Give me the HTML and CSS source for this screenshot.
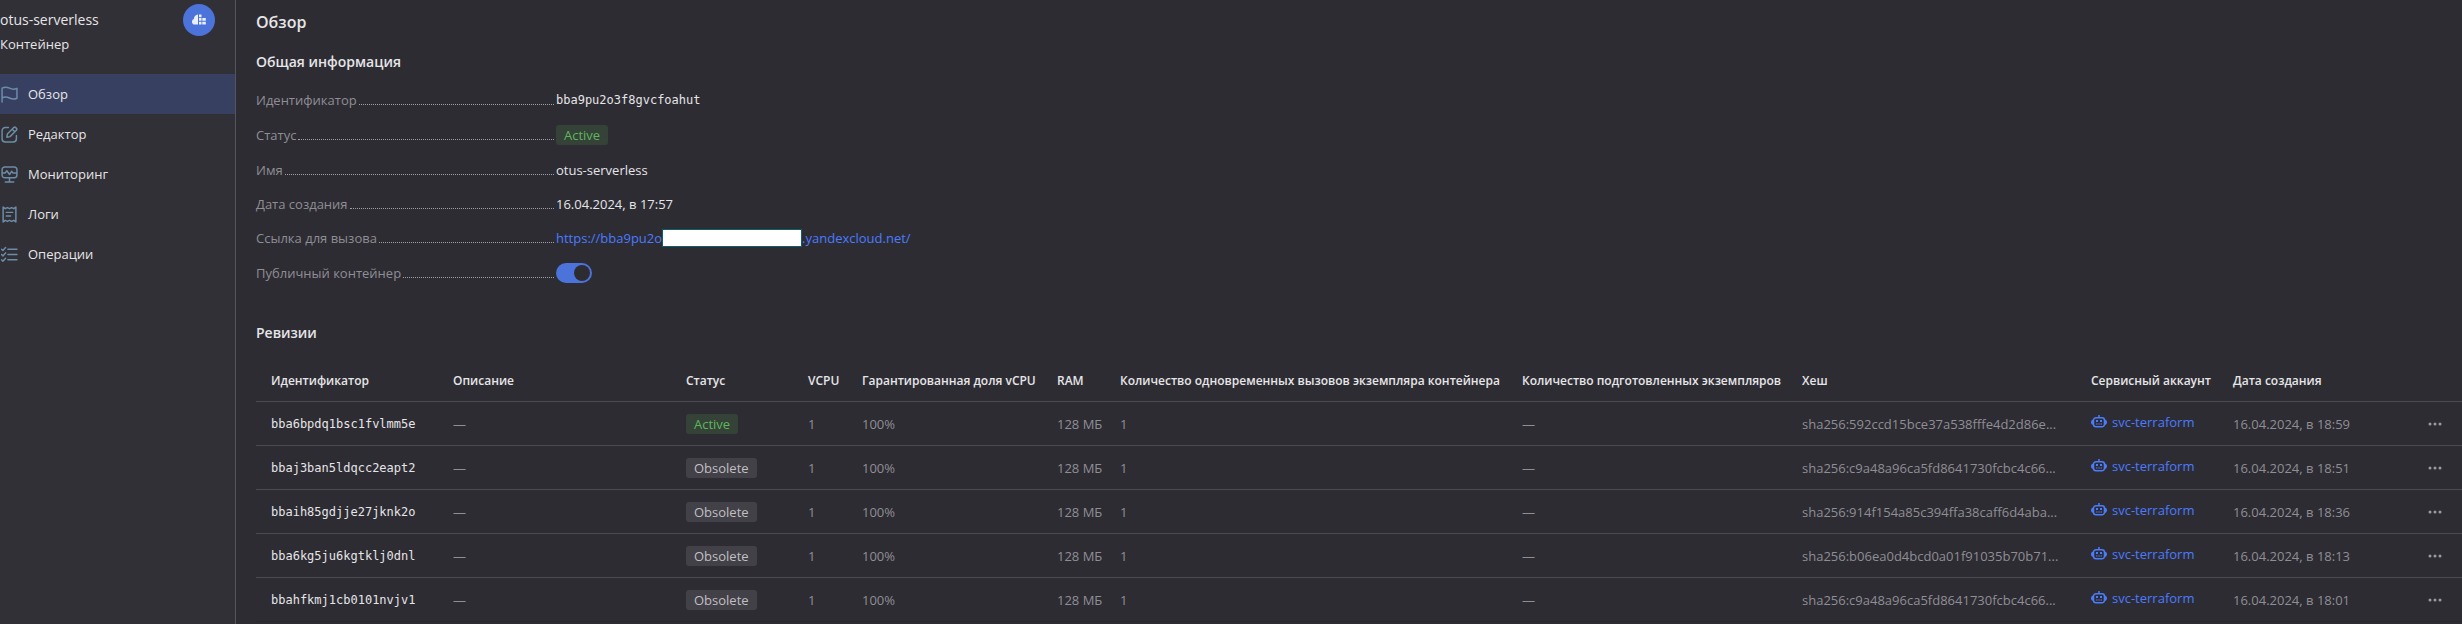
FILE: index.html
```html
<!DOCTYPE html>
<html lang="ru">
<head>
<meta charset="utf-8">
<title>otus-serverless — Обзор</title>
<link rel="stylesheet" href="styles.css">
</head>
<body>
<svg class="sprite" aria-hidden="true">
  <symbol id="robot" viewBox="0 0 16 16">
    <path d="M8 1v2.5M5 3.75h6A2.5 2.5 0 0 1 13.5 6.2v4A2.5 2.5 0 0 1 11 12.75H5a2.5 2.5 0 0 1-2.5-2.5v-4A2.5 2.5 0 0 1 5 3.75Z" fill="none" stroke="currentColor" stroke-width="1.5"/>
    <path d="M2.5 5.5C1 5.5 0 6.7 0 8.2S1 11 2.5 11ZM13.5 5.5C15 5.5 16 6.7 16 8.2S15 11 13.5 11ZM5 6h2v2H5ZM9 6h2v2H9ZM5 9.500h1.500v1H5ZM7.300 9.500h1.500v1H7.300ZM9.500 9.500H11v1H9.500Z" fill="currentColor"/>
  </symbol>
  <symbol id="dots" viewBox="0 0 16 16">
    <circle cx="3" cy="8" r="1.500" fill="currentColor"/><circle cx="8" cy="8" r="1.500" fill="currentColor"/><circle cx="13" cy="8" r="1.500" fill="currentColor"/>
  </symbol>
</svg>
<div class="app">
  <aside class="sidebar">
    <header class="service">
      <div>
        <div class="service-name">otus-serverless</div>
        <div class="service-type">Контейнер</div>
      </div>
      <div class="service-logo">
        <svg viewBox="0 0 16 16" width="16" height="16" fill="currentColor" aria-hidden="true">
          <path d="M7 2.500v10H3.800a2.800 2.800 0 0 1-2.800-2.800c0-1.300.700-2.200 1.800-2.600C2.900 4.800 4.500 2.700 7 2.500Z"/>
          <path d="M8 2.500h2.500v2.800H8ZM8 6.100h2.500v2.700H8ZM8 9.700h2.500v2.800H8ZM11.300 6.100h3.500v2.700h-3.500ZM11.300 9.700h3.500v2.800h-3.500Z"/>
        </svg>
      </div>
    </header>
    <nav class="nav">
      <a class="nav-item nav-item-active" href="#overview">
        <svg class="nav-icon" viewBox="0 0 16 16"><path d="M1 15V2c2.300-1.300 4.600-1.200 7 0s4.700 1.300 7 .2v9.300c-2.300 1.100-4.600 1-7-.2s-4.700-1.300-7-.1"/></svg>
        Обзор</a>
      <a class="nav-item" href="#editor">
        <svg class="nav-icon" viewBox="0 0 16 16"><path d="M7 1.500H4A3 3 0 0 0 1 4.500v7.500a3 3 0 0 0 3 3h7.500a3 3 0 0 0 3-3V9M5.500 10.500l.5-3L12 1.500a1.300 1.300 0 0 1 1.800 0l.7.700a1.300 1.300 0 0 1 0 1.800l-6 6ZM10.500 3l2.500 2.500"/></svg>
        Редактор</a>
      <a class="nav-item" href="#monitoring">
        <svg class="nav-icon" viewBox="0 0 16 16"><path d="M3.500 1h9A2.500 2.500 0 0 1 15 3.500v5a2.500 2.500 0 0 1-2.500 2.500h-9A2.500 2.500 0 0 1 1 8.500v-5A2.500 2.500 0 0 1 3.500 1ZM1.500 6.500H4l1.500-2L8 8l2-3 1.300 1.500h3.200M8 11v3.500M4 15h8"/></svg>
        Мониторинг</a>
      <a class="nav-item" href="#logs">
        <svg class="nav-icon" viewBox="0 0 16 16"><path d="M2 1l2 1.500L6 1.500l2 1 2-1 2 1L14 1v14l-2-1.500-2 1-2-1-2 1-2-1L2 15ZM5 6h6M5 9.500h4"/></svg>
        Логи</a>
      <a class="nav-item" href="#operations">
        <svg class="nav-icon" viewBox="0 0 16 16"><path d="M6.500 3H15M6.500 8H15M6.500 13H15M.5 3l1.300 1.300L4.300 1.500M.5 8l1.300 1.300L4.300 6.500M.5 13l1.300 1.300 2.500-2.800"/></svg>
        Операции</a>
    </nav>
  </aside>

  <main class="main">
    <h1 class="page-title">Обзор</h1>
    <h2 class="section-title">Общая информация</h2>
    <dl class="info">
      <div class="info-row"><dt class="info-label">Идентификатор</dt><dd class="info-value mono">bba9pu2o3f8gvcfoahut</dd></div>
      <div class="info-row"><dt class="info-label">Статус</dt><dd class="info-value"><span class="badge badge-active">Active</span></dd></div>
      <div class="info-row"><dt class="info-label">Имя</dt><dd class="info-value">otus-serverless</dd></div>
      <div class="info-row"><dt class="info-label">Дата создания</dt><dd class="info-value">16.04.2024, в 17:57</dd></div>
      <div class="info-row"><dt class="info-label">Ссылка для вызова</dt><dd class="info-value"><a class="link invoke-link" href="#invoke">https://bba9pu2o<span class="mask"></span>.yandexcloud.net/</a></dd></div>
      <div class="info-row"><dt class="info-label"><label for="public">Публичный контейнер</label></dt><dd class="info-value"><input class="switch" type="checkbox" role="switch" id="public" checked></dd></div>
    </dl>

    <h2 class="section-title revisions-title">Ревизии</h2>
    <table class="table">
      <colgroup>
        <col class="col-id"><col><col class="col-status"><col class="col-vcpu"><col class="col-share"><col class="col-ram"><col class="col-calls"><col class="col-prepared"><col class="col-hash"><col class="col-account"><col class="col-date"><col class="col-menu">
      </colgroup>
      <thead>
        <tr><th>Идентификатор</th><th>Описание</th><th>Статус</th><th>VCPU</th><th>Гарантированная доля vCPU</th><th>RAM</th><th>Количество одновременных вызовов экземпляра контейнера</th><th>Количество подготовленных экземпляров</th><th>Хеш</th><th>Сервисный аккаунт</th><th>Дата создания</th><th></th></tr>
      </thead>
      <tbody>
        <tr><td class="mono">bba6bpdq1bsc1fvlmm5e</td><td>—</td><td><span class="badge badge-active">Active</span></td><td>1</td><td>100%</td><td>128 МБ</td><td>1</td><td>—</td><td>sha256:592ccd15bce37a538fffe4d2d86e...</td><td><a class="link account" href="#account"><svg class="account-icon"><use href="#robot"/></svg>svc-terraform</a></td><td>16.04.2024, в 18:59</td><td><button class="menu" aria-label="Действия"><svg class="menu-icon"><use href="#dots"/></svg></button></td></tr>
        <tr><td class="mono">bbaj3ban5ldqcc2eapt2</td><td>—</td><td><span class="badge">Obsolete</span></td><td>1</td><td>100%</td><td>128 МБ</td><td>1</td><td>—</td><td>sha256:c9a48a96ca5fd8641730fcbc4c66...</td><td><a class="link account" href="#account"><svg class="account-icon"><use href="#robot"/></svg>svc-terraform</a></td><td>16.04.2024, в 18:51</td><td><button class="menu" aria-label="Действия"><svg class="menu-icon"><use href="#dots"/></svg></button></td></tr>
        <tr><td class="mono">bbaih85gdjje27jknk2o</td><td>—</td><td><span class="badge">Obsolete</span></td><td>1</td><td>100%</td><td>128 МБ</td><td>1</td><td>—</td><td>sha256:914f154a85c394ffa38caff6d4aba...</td><td><a class="link account" href="#account"><svg class="account-icon"><use href="#robot"/></svg>svc-terraform</a></td><td>16.04.2024, в 18:36</td><td><button class="menu" aria-label="Действия"><svg class="menu-icon"><use href="#dots"/></svg></button></td></tr>
        <tr><td class="mono">bba6kg5ju6kgtklj0dnl</td><td>—</td><td><span class="badge">Obsolete</span></td><td>1</td><td>100%</td><td>128 МБ</td><td>1</td><td>—</td><td>sha256:b06ea0d4bcd0a01f91035b70b71...</td><td><a class="link account" href="#account"><svg class="account-icon"><use href="#robot"/></svg>svc-terraform</a></td><td>16.04.2024, в 18:13</td><td><button class="menu" aria-label="Действия"><svg class="menu-icon"><use href="#dots"/></svg></button></td></tr>
        <tr><td class="mono">bbahfkmj1cb0101nvjv1</td><td>—</td><td><span class="badge">Obsolete</span></td><td>1</td><td>100%</td><td>128 МБ</td><td>1</td><td>—</td><td>sha256:c9a48a96ca5fd8641730fcbc4c66...</td><td><a class="link account" href="#account"><svg class="account-icon"><use href="#robot"/></svg>svc-terraform</a></td><td>16.04.2024, в 18:01</td><td><button class="menu" aria-label="Действия"><svg class="menu-icon"><use href="#dots"/></svg></button></td></tr>
      </tbody>
    </table>
  </main>
</div>
</body>
</html>
```
FILE: styles.css
```css
* { box-sizing: border-box; }

body {
  margin: 0;
  background: #2d2c33;
  color: #e6e5e7;
  font: 13px/18px "Open Sans", "Noto Sans", sans-serif;
}

.sprite { display: none; }

.app { display: flex; min-height: 100vh; }

/* Sidebar */
.sidebar {
  flex: 0 0 236px;
  background: #313036;
  border-right: 1px solid #55545a;
}

.service {
  display: flex;
  justify-content: space-between;
  height: 74px;
  padding: 4px 20px 0 0;
}

.service-name { font-size: 14px; line-height: 32px; }
.service-type { line-height: 16px; }

.service-logo {
  display: flex;
  align-items: center;
  justify-content: center;
  width: 32px;
  height: 32px;
  border-radius: 50%;
  background: #4b73d9;
  color: #e8eefc;
}

.nav-item {
  display: flex;
  align-items: center;
  gap: 10px;
  height: 40px;
  padding-left: 1px;
  color: inherit;
  text-decoration: none;
}

.nav-item-active { background: #384061; }

.nav-icon {
  width: 17px;
  height: 17px;
  fill: none;
  stroke: #6c8ca8;
  stroke-width: 1.4;
  stroke-linecap: round;
  stroke-linejoin: round;
}

/* Content */
.main { flex: 1; min-width: 0; padding: 10px 0 0 20px; }

.page-title { margin: 0 0 18px; font-size: 16px; line-height: 24px; font-weight: 600; }
.section-title { margin: 0; font-size: 14px; line-height: 20px; font-weight: 600; }

.info { display: flex; flex-direction: column; gap: 16px; margin: 19px 0 0; }
.info-row { display: flex; align-items: center; }

.info-label {
  display: flex;
  flex: 0 0 300px;
  padding-right: 2px;
  color: #8f8e93;
}

.info-label::after {
  content: "";
  flex: 1;
  height: 13px;
  margin-left: 2px;
  border-bottom: 1px dotted #a09fa3;
}

.info-value { display: flex; margin: 0; }

.mono { font-family: "DejaVu Sans Mono", monospace; font-size: 12px; color: #e6e5e7; }

.badge {
  display: inline-block;
  height: 20px;
  padding: 0 8px;
  border-radius: 3px;
  background: #424147;
  color: #c0bfc3;
  line-height: 20px;
}

.badge-active { background: #354238; color: #5fb55f; }

.link { color: #4b7bff; text-decoration: none; }
.invoke-link { display: flex; }

.mask {
  width: 140px;
  height: 18px;
  border: 1px solid #0d6068;
  background: #fff;
}

.switch {
  appearance: none;
  display: flex;
  justify-content: flex-end;
  width: 36px;
  height: 20px;
  margin: 0;
  padding: 2px;
  border-radius: 10px;
  background: #4b73d9;
}

.switch::before {
  content: "";
  width: 16px;
  height: 16px;
  border-radius: 50%;
  background: #2d2c33;
}

/* Revisions */
.revisions-title { margin-top: 40px; }

.table {
  width: 100%;
  margin-top: 18px;
  border-collapse: separate;
  border-spacing: 0;
  table-layout: fixed;
}

.col-id { width: 187px; }
.col-status { width: 122px; }
.col-vcpu { width: 54px; }
.col-share { width: 195px; }
.col-ram { width: 63px; }
.col-calls { width: 402px; }
.col-prepared { width: 280px; }
.col-hash { width: 289px; }
.col-account { width: 142px; }
.col-date { width: 185px; }
.col-menu { width: 54px; }

.table th,
.table td {
  height: 44px;
  padding: 0 10px;
  text-align: left;
  vertical-align: middle;
  white-space: nowrap;
}

.table th { height: 41px; border-bottom: 1px solid #4b4a50; font-size: 12px; font-weight: 600; }
.table td { border-bottom: 1px solid #4b4a50; }
.table td:not(.mono) { color: #8f8e93; }
.table th:first-child,
.table td:first-child { padding-left: 15px; }
.table tbody tr:last-child td { border-color: #29282e; }

.account { display: flex; align-items: center; gap: 5px; padding-bottom: 4px; }
.account-icon { width: 16px; height: 16px; }

.menu {
  display: block;
  width: 28px;
  height: 28px;
  margin: 0 auto;
  padding: 6px;
  border: 0;
  background: none;
  color: #9b9a9f;
}

.menu-icon { display: block; width: 16px; height: 16px; }
```
